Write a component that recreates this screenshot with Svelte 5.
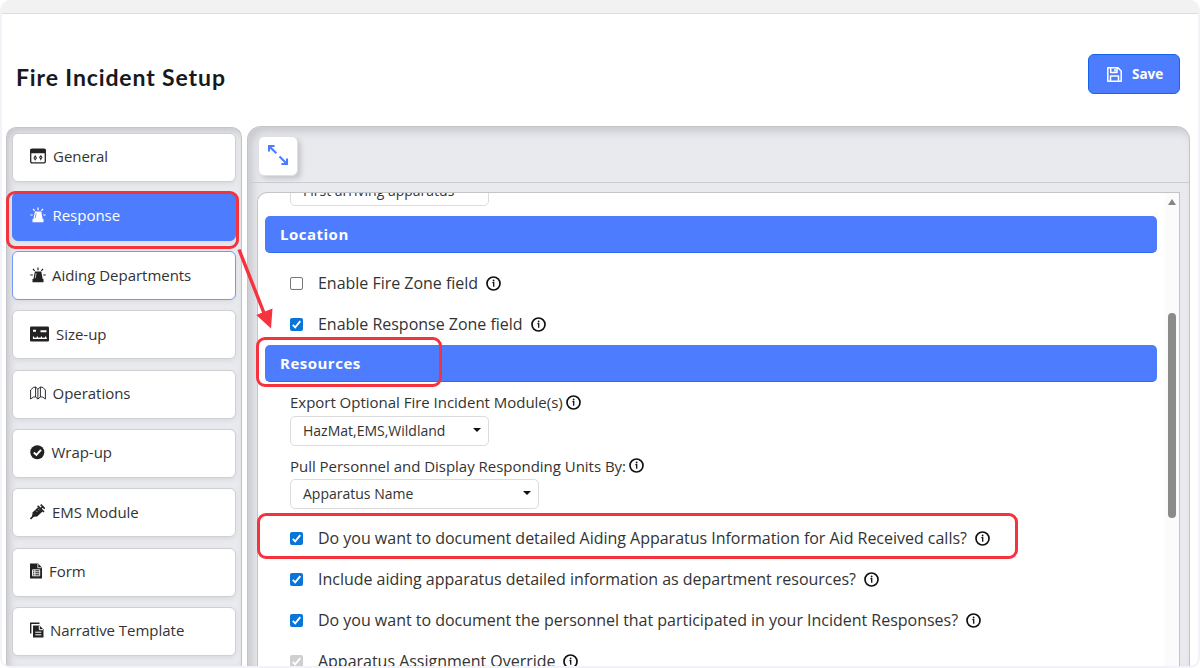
<script lang="ts">
type Field = { label: string; checked: boolean; disabled?: boolean };

const sections = [
	{ label: "General", icon: "general", width: 16, gap: 7 },
	{ label: "Response", icon: "siren", width: 16, gap: 6.5, active: true },
	{ label: "Aiding Departments", icon: "siren", width: 16, gap: 6, focused: true },
	{ label: "Size-up", icon: "sizeup", width: 19, gap: 7 },
	{ label: "Operations", icon: "map", width: 16, gap: 6.5 },
	{ label: "Wrap-up", icon: "check", width: 15, gap: 6.5 },
	{ label: "EMS Module", icon: "syringe", width: 15, gap: 7 },
	{ label: "Form", icon: "form", width: 12, gap: 7 },
	{ label: "Narrative Template", icon: "copy", width: 14, gap: 6 },
];

const locationFields: Field[] = [
	{ label: "Enable Fire Zone field", checked: false },
	{ label: "Enable Response Zone field", checked: true },
];

const resourceFields: Field[] = [
	{
		label: "Do you want to document detailed Aiding Apparatus Information for Aid Received calls?",
		checked: true,
	},
	{ label: "Include aiding apparatus detailed information as department resources?", checked: true },
	{
		label: "Do you want to document the personnel that participated in your Incident Responses?",
		checked: true,
	},
	{ label: "Apparatus Assignment Override", checked: true, disabled: true },
];
</script>

{#snippet info()}
	<svg class="info" viewBox="0 0 15 15">
		<circle cx="7.5" cy="7.5" r="6.5" fill="none" stroke="#111" stroke-width="1.7" />
		<path d="M6.4 6.7H7.7V10.8" fill="none" stroke="#111" stroke-width="1.3" />
		<circle cx="7.6" cy="4.500" r=".9" fill="#111" />
	</svg>
{/snippet}

{#snippet field(f: Field)}
	<label class="field">
		<span class="box" class:checked={f.checked} class:disabled={f.disabled}>
			{#if f.checked}
				<svg viewBox="0 0 13 13"><path d="M2.8 6.8L5.2 9.3L10.3 3.2" /></svg>
			{/if}
		</span>
		<span class="field-label">{f.label}</span>
		{@render info()}
	</label>
{/snippet}

{#snippet icon(name: string, width: number)}
	<svg class="icon" style:width="{width}px" viewBox="0 0 {width} 16">
		{#if name === "general"}
			<rect x=".7" y="1.2" width="14.6" height="13.6" rx="1.3" fill="none" stroke="currentColor" stroke-width="1.3" />
			<path d="M.5 1H15.500V5.300H.5Z" fill="currentColor" />
			<path d="M5.2 7L7 9.900L5.2 12.8L3.4 9.900ZM10.8 7L12.6 9.300L11.6 10.8L10.8 12.8L10 10.8L9 9.300Z" fill="currentColor" />
			<path d="M5.2 9.2V10.8M10.8 8.8V10" stroke="#fff" stroke-width=".8" />
		{:else if name === "siren"}
			<path d="M4.900 4.5H11.3L12.7 12H13.5V15.2H2.5V12H3.4Z" fill="currentColor" />
			<path d="M8 .5V3.2M3 1.800L4.7 3.8M13 1.800L11.3 3.8M.3 8H2.8M13.2 8H15.7" stroke="currentColor" stroke-width="1.2" />
			<path d="M6.1 6.2L5.2 11.2" stroke="var(--siren-line)" stroke-width=".7" />
		{:else if name === "sizeup"}
			<rect x="0" y=".5" width="19" height="15" rx="1.3" fill="currentColor" />
			<path d="M3 4.700H6M10.5 5.2H16.5" stroke="#fff" stroke-width="2" />
			<path d="M2.900 12.3H16.8" stroke="#fff" stroke-width="1.4" />
			<path d="M3.5 10.5V12M7.4 10.5V12M11.4 10.5V12M15.6 10.5V12" stroke="#fff" stroke-width="1.2" />
		{:else if name === "map"}
			<path
				d="M.6 14V5L3.3 2.500L5.6 2V12L3.500 12ZM5.6 2L7.900 4.2V14L5.6 12M7.900 14L10.4 12V2L7.900 4.2M10.4 2L13 2.500L15.4 5V14L12.700 12H10.4"
				fill="none"
				stroke="currentColor"
				stroke-width=".95"
				stroke-linejoin="round"
			/>
		{:else if name === "check"}
			<circle cx="7.3" cy="8.2" r="7" fill="currentColor" />
			<path d="M3.8 8.5L6.4 11L11 5.8" fill="none" stroke="#fff" stroke-width="1.9" />
		{:else if name === "syringe"}
			<path d="M1.800 13L2.8 8.2L8.2 3L12.7 7.2L7.2 12.4Z" fill="currentColor" />
			<path d="M.5 15L3.5 12M7.6 1.7L14 8M10.6 4.8L13 2.4M10.7.6L14.800 4.8" stroke="currentColor" stroke-width="1.6" />
			<path d="M6 6.600L7.3 7.900M8 4.800L9.3 6.1" stroke="#fff" stroke-width=".6" />
		{:else if name === "form"}
			<path d="M0 .5H8L12 4.5V15.5H0Z" fill="currentColor" />
			<path d="M7.8 1V4.7H11.5" fill="none" stroke="#fff" stroke-width=".8" />
			<path d="M2.5 6.8H9.7V12.8H2.5ZM2.5 8.8H9.7M2.5 10.8H9.7M4.8 6.8V12.8" fill="none" stroke="#fff" stroke-width=".9" />
		{:else}
			<path d="M.7 11.5V1.2H9.5" fill="none" stroke="currentColor" stroke-width="1.4" />
			<path d="M3 3.5H9.5L13.5 7.5V15.5H3Z" fill="currentColor" />
			<path d="M9.3 4V7.7H13M5.3 10.2H11.3M5.3 12.8H11.3" fill="none" stroke="#fff" stroke-width="1" />
		{/if}
	</svg>
{/snippet}

<div class="page">
	<div class="topbar"></div>

	<header>
		<h1>Fire Incident Setup</h1>
		<button class="save">
			<svg viewBox="0 0 15 15">
				<path
					d="M.8.8H11L14.2 4V14.2H.8ZM3.7 1V5.6H10V1M3.5 14V9H11.5V14M8 2V4.4"
					fill="none"
					stroke="currentColor"
					stroke-width="1.5"
					stroke-linejoin="round"
				/>
			</svg>
			<span>Save</span>
		</button>
	</header>

	<div class="columns">
		<nav>
			{#each sections as s}
				<button class="tab" class:active={s.active} class:focused={s.focused} style:gap="{s.gap}px">
					{@render icon(s.icon, s.width)}
					<span>{s.label}</span>
				</button>
			{/each}
		</nav>

		<main>
			<div class="toolbar">
				<button class="expand" aria-label="Expand">
					<svg viewBox="0 0 22 22">
						<path
							d="M2 7.500V2H7.500M2 2L9.3 9.3M14.500 20H20V14.500M12.5 12.5L20 20"
							fill="none"
							stroke="currentColor"
							stroke-width="2.1"
						/>
					</svg>
				</button>
			</div>

			<div class="panel">
				<div class="content">
					<div class="select clipped"><span>First arriving apparatus</span></div>

					<h2 class="location">Location</h2>
					{#each locationFields as f}
						{@render field(f)}
					{/each}

					<h2>Resources</h2>
					<div class="caption"><span>Export Optional Fire Incident Module(s)</span>{@render info()}</div>
					<div class="select"><span>HazMat,EMS,Wildland</span><i></i></div>
					<div class="caption"><span>Pull Personnel and Display Responding Units By:</span>{@render info()}</div>
					<div class="select wide"><span>Apparatus Name</span><i></i></div>

					<div class="group">
						{#each resourceFields as f}
							{@render field(f)}
						{/each}
					</div>
				</div>
				<div class="scrollbar">
					<div class="up"></div>
					<div class="thumb"></div>
				</div>
			</div>
		</main>
	</div>

	<!-- callouts over the page -->
	<div class="callout response"></div>
	<div class="callout resources"></div>
	<div class="callout aiding"></div>
	<svg class="arrow" viewBox="0 0 50 90">
		<path d="M9 8.500L34 72" stroke="#f5333f" stroke-width="3.4" />
		<path d="M26.300 74L42.500 67.500L41 87.500Z" fill="#f5333f" />
	</svg>
</div>

<style>
	:global(body) {
		background: #fff;
	}

	.page,
	.page * {
		box-sizing: border-box;
	}

	.page {
		position: relative;
		display: flex;
		flex-direction: column;
		width: 1200px;
		height: 668px;
		border: 2px solid #f2f2f8;
		border-top: 0;
		border-radius: 10px;
		background: #fff;
		overflow: hidden;
		color: #333;
		font-family: "Open Sans", sans-serif;
	}

	.topbar {
		flex: none;
		height: 14px;
		background: #f2f2f3;
		border-bottom: 1px solid #dedee0;
	}

	header {
		display: flex;
		justify-content: space-between;
		align-items: center;
		flex: none;
		height: 112px;
		padding: 8px 18px 0 14px;
	}

	h1 {
		margin: 5px 0 0;
		color: #17191c;
		font: 700 23px/30px Lato, sans-serif;
		letter-spacing: 0.88px;
	}

	button {
		padding: 0;
		font-family: inherit;
	}

	.save {
		display: flex;
		align-items: center;
		gap: 10px;
		width: 92px;
		height: 40px;
		padding-left: 18px;
		color: #fff;
		background: #4d7dfe;
		border: 1px solid #1463ec;
		border-radius: 6px;
		font-size: 13.500px;
		font-weight: 700;
	}

	.save svg {
		width: 15px;
		height: 15px;
	}

	.columns {
		display: flex;
		flex: 1;
		min-height: 0;
		gap: 5px;
		padding: 0 8px 0 4px;
	}

	nav {
		display: flex;
		flex-direction: column;
		gap: 10.3px;
		width: 236px;
		margin-top: 1px;
		padding: 4.500px 5px 0;
		background: #e9eaee;
		border: 1px solid #c3c4c8;
		border-bottom: 0;
		border-radius: 10px 10px 0 0;
		box-shadow: inset 3px 4px 7px #c9cacf;
	}

	.tab {
		display: flex;
		align-items: center;
		flex: none;
		height: 49px;
		padding: 0 0 2px 17px;
		color: #333;
		background: #fff;
		border: 1px solid #d0d0d2;
		border-radius: 6px;
		box-shadow: 0 2px 4px #d9dade;
		font-size: 15px;
		letter-spacing: -0.03px;
		text-align: left;
		--siren-line: #fff;
	}

	.tab.active {
		color: #fff;
		background: #4d7dfe;
		border-color: #4d7dfe;
		--siren-line: #4d7dfe;
	}

	.tab.focused {
		border-color: #7398fa;
	}

	.icon {
		flex: none;
		height: 16px;
		color: #222;
	}

	.active .icon {
		color: #fff;
	}

	main {
		display: flex;
		flex-direction: column;
		flex: 1;
		min-width: 0;
		background: #e9eaee;
		border: 1px solid #c3c4c8;
		border-bottom: 0;
		border-radius: 14px 14px 0 0;
		box-shadow: inset 5px 5px 8px #c9cacf;
	}

	.toolbar {
		flex: none;
		height: 56px;
		padding: 9px 0 0 10px;
		border-bottom: 1px solid #ccccd1;
	}

	.expand {
		display: grid;
		place-items: center;
		width: 40px;
		height: 40px;
		padding: 0 0 3px;
		color: #4d7dfe;
		background: #fff;
		border: 1px solid #e0e0e3;
		border-radius: 6px;
		box-shadow: 3px 3px 5px #c5c6cb;
	}

	.expand svg {
		width: 22px;
		height: 22px;
	}

	.panel {
		display: flex;
		flex: 1;
		min-height: 0;
		margin: 9px 9px 0;
		background: #fff;
		border: 1px solid #c3c4c8;
		border-bottom: 0;
		border-radius: 10px 0 0 0;
		overflow: hidden;
	}

	.content {
		display: flex;
		flex-direction: column;
		flex: 1;
		padding: 0 8px 0 7px;
		overflow: hidden;
	}

	.content > * {
		flex: none;
	}

	h2 {
		display: flex;
		align-items: center;
		height: 37px;
		margin: 0;
		padding: 0 15px;
		color: #fff;
		background: #4d7dfe;
		border-bottom: 1px solid #2e6bf2;
		border-radius: 5px;
		font-size: 15px;
		font-weight: 700;
		letter-spacing: 0.5px;
	}

	h2.location {
		margin: 10px 0;
	}

	.field {
		display: flex;
		align-items: center;
		height: 41px;
		padding-left: 25px;
		font-size: 16px;
		letter-spacing: -0.018px;
	}

	.field-label {
		margin-top: -2px;
	}

	.box {
		width: 13px;
		height: 13px;
		margin-right: 15px;
		border: 1px solid #767676;
		border-radius: 2px;
		background: #fff;
	}

	.box.checked {
		border: 0;
		background: #0975d8;
	}

	.box.disabled {
		background: #cfcfcf;
	}

	.box svg {
		display: block;
		fill: none;
		stroke: #fff;
		stroke-width: 1.9;
	}

	.info {
		flex: none;
		width: 15px;
		height: 15px;
	}

	.field .info {
		margin-left: 8px;
	}

	.caption {
		display: flex;
		align-items: center;
		gap: 3px;
		height: 34px;
		padding: 6px 0 0 25px;
		font-size: 15px;
		letter-spacing: -0.02px;
	}

	.select + .caption {
		height: 33px;
	}

	.select {
		display: flex;
		align-items: center;
		justify-content: space-between;
		width: 199px;
		height: 30px;
		margin-left: 25px;
		padding: 0 7px 2px 12px;
		background: #fff;
		border: 1px solid #dcdcde;
		border-radius: 5px;
		font-size: 14px;
	}

	.select.wide {
		width: 249px;
	}

	.select.clipped {
		margin-top: -17px;
	}

	.select i {
		border: 4px solid transparent;
		border-top-color: #111;
		border-bottom: 0;
	}

	.group {
		margin-top: 9px;
	}

	.scrollbar {
		width: 14px;
		padding: 6px 3px;
		background: #fbfbfb;
	}

	.up {
		margin-bottom: 108px;
		border: 4px solid transparent;
		border-top: 0;
		border-bottom: 6px solid #858585;
	}

	.thumb {
		width: 8px;
		height: 205px;
		background: #8b8b8b;
		border-radius: 4px;
	}

	.callout {
		position: absolute;
		border: 3px solid #f5333f;
		border-radius: 9px;
	}

	.response {
		left: 4px;
		top: 191px;
		width: 233px;
		height: 58px;
	}

	.resources {
		left: 254px;
		top: 337px;
		width: 186px;
		height: 50px;
	}

	.aiding {
		left: 255px;
		top: 513px;
		width: 761px;
		height: 46px;
	}

	.arrow {
		position: absolute;
		left: 228px;
		top: 241px;
		width: 50px;
		height: 90px;
	}
</style>
